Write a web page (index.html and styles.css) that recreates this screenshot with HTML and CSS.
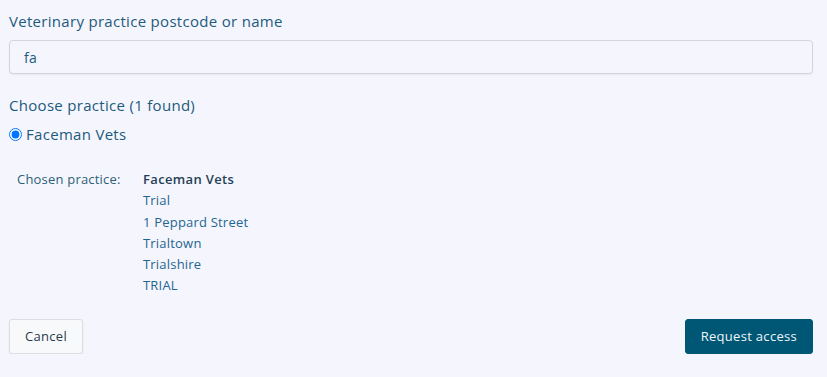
FILE: index.html
```html
<!DOCTYPE html>
<html lang="en">
<head>
<meta charset="UTF-8">
<meta name="viewport" content="width=device-width, initial-scale=1.0">
<title>Request practice access</title>
<link rel="stylesheet" href="styles.css">
</head>
<body>
    <form class="panel">
        <label class="field-label" for="search">Veterinary practice postcode or name</label>
        <input class="text-input" id="search" type="text" value="fa">

        <div class="field-label choose">Choose practice (1 found)</div>
        <label class="radio-row">
            <input type="radio" name="practice" checked>
            <span>Faceman Vets</span>
        </label>

        <!-- chosen practice -->
        <div class="chosen">
            <div class="chosen-title">Chosen practice:</div>
            <div class="chosen-address">
                <div class="practice-name">Faceman Vets</div>
                <div>Trial</div>
                <div>1 Peppard Street</div>
                <div>Trialtown</div>
                <div>Trialshire</div>
                <div>TRIAL</div>
            </div>
        </div>

        <div class="actions">
            <button type="button" class="btn btn-cancel">Cancel</button>
            <button type="button" class="btn btn-primary">Request access</button>
        </div>
    </form>
</body>
</html>
```

FILE: styles.css
```css
body {
    margin: 0;
    background: #f5f6fd;
    font-family: "Open Sans", "Liberation Sans", sans-serif;
    color: #1d5a7c;
    letter-spacing: 0.3px;
}
.panel {
    padding: 11px 14px 0 9px;
    display: flex;
    flex-direction: column;
}
.field-label {
    font-size: 15px;
    line-height: 20px;
    color: #1d5a7c;
}
.text-input {
    margin-top: 9px;
    height: 34px;
    box-sizing: border-box;
    border: 1px solid #d3d5de;
    border-radius: 4px;
    background: #f5f6fd;
    padding: 0 14px;
    font-family: inherit;
    font-size: 14px;
    letter-spacing: 0.3px;
    color: #1d5a7c;
    box-shadow: 0 1px 2px rgba(0,0,0,0.06);
}
.choose {
    margin-top: 21px;
}
.radio-row {
    display: flex;
    align-items: center;
    gap: 4px;
    margin-top: 9px;
    font-size: 15px;
    line-height: 20px;
}
.radio-row input {
    margin: 0;
    width: 13px;
    height: 13px;
}
.chosen {
    display: flex;
    margin-top: 25px;
    padding-left: 8px;
    font-size: 13px;
    line-height: 21.3px;
    letter-spacing: 0.2px;
}
.chosen-title {
    width: 126px;
    color: #2e5f78;
}
.chosen-address {
    color: #1f6591;
}
.practice-name {
    font-weight: 600;
    letter-spacing: 0.35px;
    color: #243f55;
}
.actions {
    display: flex;
    justify-content: space-between;
    margin-top: 22px;
}
.btn {
    height: 35px;
    padding: 0 15px;
    border-radius: 3px;
    font-family: inherit;
    font-size: 13px;
    letter-spacing: 0.3px;
    cursor: pointer;
}
.btn-cancel {
    background: #f8f9fb;
    color: #2b3a4a;
    border: 1px solid #dcdee4;
    box-shadow: 0 1px 2px rgba(0,0,0,0.08);
}
.btn-primary {
    background: #005675;
    color: #eef6fa;
    border: 1px solid #005675;
}
```
